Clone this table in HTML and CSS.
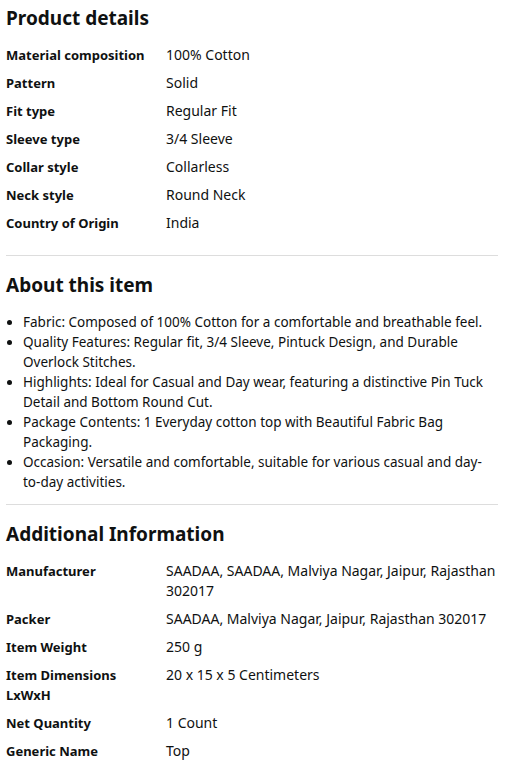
FILE: index.html
```html
<!DOCTYPE html>
<html>
<head>
<meta charset="utf-8">
<link rel="stylesheet" href="styles.css">
</head>
<body>
<div class="page">
  <section class="section">
    <h2 class="heading">Product details</h2>
    <div class="table">
      <div class="row"><div class="label">Material composition</div><div class="value">100% Cotton</div></div>
      <div class="row"><div class="label">Pattern</div><div class="value">Solid</div></div>
      <div class="row"><div class="label">Fit type</div><div class="value">Regular Fit</div></div>
      <div class="row"><div class="label">Sleeve type</div><div class="value">3/4 Sleeve</div></div>
      <div class="row"><div class="label">Collar style</div><div class="value">Collarless</div></div>
      <div class="row"><div class="label">Neck style</div><div class="value">Round Neck</div></div>
      <div class="row"><div class="label">Country of Origin</div><div class="value">India</div></div>
    </div>
  </section>
  <hr class="divider divider-first">
  <section class="section">
    <h2 class="heading">About this item</h2>
    <ul class="bullets">
      <li>Fabric: Composed of 100% Cotton for a comfortable and breathable feel.</li>
      <li>Quality Features: Regular fit, 3/4 Sleeve, Pintuck Design, and Durable Overlock Stitches.</li>
      <li>Highlights: Ideal for Casual and Day wear, featuring a distinctive Pin Tuck Detail and Bottom Round Cut.</li>
      <li>Package Contents: 1 Everyday cotton top with Beautiful Fabric Bag Packaging.</li>
      <li>Occasion: Versatile and comfortable, suitable for various casual and day-to-day activities.</li>
    </ul>
  </section>
  <hr class="divider">
  <section class="section">
    <h2 class="heading">Additional Information</h2>
    <div class="table">
      <div class="row"><div class="label">Manufacturer</div><div class="value">SAADAA, SAADAA, Malviya Nagar, Jaipur, Rajasthan 302017</div></div>
      <div class="row"><div class="label">Packer</div><div class="value">SAADAA, Malviya Nagar, Jaipur, Rajasthan 302017</div></div>
      <div class="row"><div class="label">Item Weight</div><div class="value">250 g</div></div>
      <div class="row"><div class="label">Item Dimensions LxWxH</div><div class="value">20 x 15 x 5 Centimeters</div></div>
      <div class="row"><div class="label">Net Quantity</div><div class="value">1 Count</div></div>
      <div class="row"><div class="label">Generic Name</div><div class="value">Top</div></div>
    </div>
  </section>
</div>
</body>
</html>
```
FILE: styles.css
```css
* { box-sizing: border-box; }
body {
  margin: 0;
  background: #ffffff;
  color: #0f1111;
  font-family: "Noto Sans", "Open Sans", sans-serif;
  font-size: 13px;
  line-height: 20px;
}
.page {
  width: 498px;
  padding: 4px 0 0 6px;
}
.heading {
  margin: 0;
  font-size: 19px;
  line-height: 28px;
  font-weight: 700;
}
.table {
  display: flex;
  flex-direction: column;
  gap: 8px;
  margin-top: 13px;
}
.row {
  display: grid;
  grid-template-columns: 160px 1fr;
}
.label { font-weight: 700; padding-right: 20px; }
.value { font-size: 14px; }
.divider {
  border: 0;
  border-top: 1px solid #dddddd;
  margin: 12px 0 15px;
}
.divider-first { margin-top: 22px; }
.bullets {
  margin: 13px 0 0;
  padding-left: 17px;
  padding-right: 4px;
  font-size: 13.5px;
}
```
